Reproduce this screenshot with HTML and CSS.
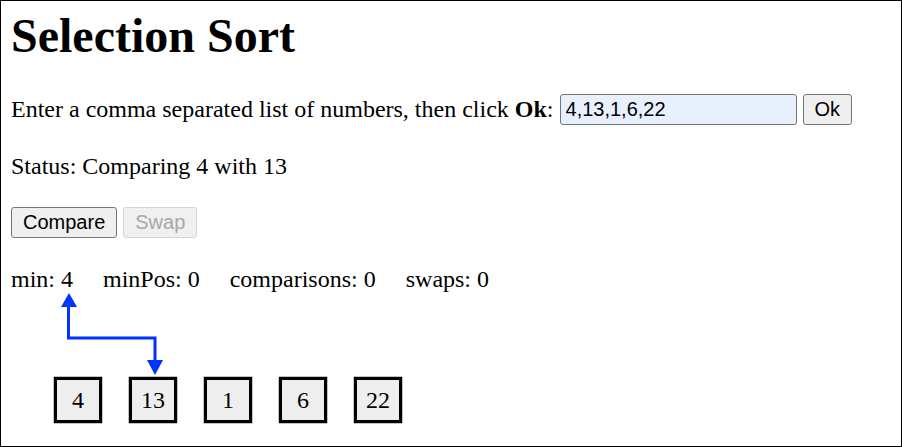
FILE: index.html
```html
<!DOCTYPE html>
<html>
<head>
<meta charset="utf-8">
<link rel="stylesheet" href="styles.css">
</head>
<body>
<div class="frame">
  <h1 class="title">Selection Sort</h1>
  <div class="input-row">
    <span>Enter a comma separated list of numbers, then click <b>Ok</b>:</span>
    <input class="list-input" type="text" value="4,13,1,6,22">
    <button class="btn">Ok</button>
  </div>
  <p class="status">Status: Comparing 4 with 13</p>
  <div class="btn-row">
    <button class="btn">Compare</button>
    <button class="btn" disabled>Swap</button>
  </div>
  <div class="stats">
    <span class="stat">min: 4</span>
    <span class="stat">minPos: 0</span>
    <span class="stat">comparisons: 0</span>
    <span class="stat">swaps: 0</span>
  </div>
  <svg class="arrows" width="880" height="84" viewBox="0 0 880 84">
    <g transform="translate(-11,-293)">
      <polyline points="68.5,306 68.5,338 155,338 155,361" fill="none" stroke="#0033ff" stroke-width="3"/>
      <polygon points="69,293 61,307 77,307" fill="#0033ff"/>
      <polygon points="155,375 147,360 163,360" fill="#0033ff"/>
    </g>
  </svg>
  <div class="cells">
    <div class="cell">4</div>
    <div class="cell">13</div>
    <div class="cell">1</div>
    <div class="cell">6</div>
    <div class="cell">22</div>
  </div>
</div>
</body>
</html>
```
FILE: styles.css
```css
html, body {
  margin: 0;
  padding: 0;
  background: #fff;
}
.frame {
  box-sizing: border-box;
  width: 902px;
  height: 447px;
  border: 1px solid #000;
  padding: 0 10px;
  font-family: "Liberation Serif", "Times New Roman", serif;
  font-size: 24px;
  color: #000;
  overflow: hidden;
}
.title {
  margin: 8px 0 0;
  font-size: 48px;
  line-height: 53px;
  font-weight: bold;
}
.input-row {
  display: flex;
  align-items: center;
  height: 31px;
  margin-top: 32px;
  white-space: nowrap;
}
.list-input {
  box-sizing: border-box;
  width: 237px;
  height: 31px;
  margin: 0 6px 0 6px;
  padding: 0 5px;
  font-family: "Liberation Sans", Arial, sans-serif;
  font-size: 20px;
  color: #000;
  background: #e8f0fe;
  border: 1px solid #767676;
  border-radius: 3px;
}
.btn {
  box-sizing: border-box;
  height: 31px;
  padding: 0 11px;
  font-family: "Liberation Sans", Arial, sans-serif;
  font-size: 20px;
  color: #000;
  background: #efefef;
  border: 1px solid #767676;
  border-radius: 3px;
}
.btn:disabled {
  color: #a8a8a8;
  background: #f0f0f0;
  border-color: #d4d4d4;
}
.status {
  margin: 28px 0 0;
  line-height: 27px;
}
.btn-row {
  display: flex;
  gap: 6px;
  height: 31px;
  margin-top: 27px;
}
.stats {
  display: flex;
  gap: 30px;
  margin-top: 28px;
  line-height: 27px;
  white-space: nowrap;
}
.arrows {
  display: block;
}
.cells {
  display: flex;
  gap: 27px;
  padding-left: 43px;
}
.cell {
  box-sizing: border-box;
  width: 48px;
  height: 46px;
  border: 3px solid #000;
  box-shadow: 0 0 0 0.5px #888;
  background: #eee;
  display: flex;
  align-items: center;
  justify-content: center;
  font-size: 24px;
}
```
